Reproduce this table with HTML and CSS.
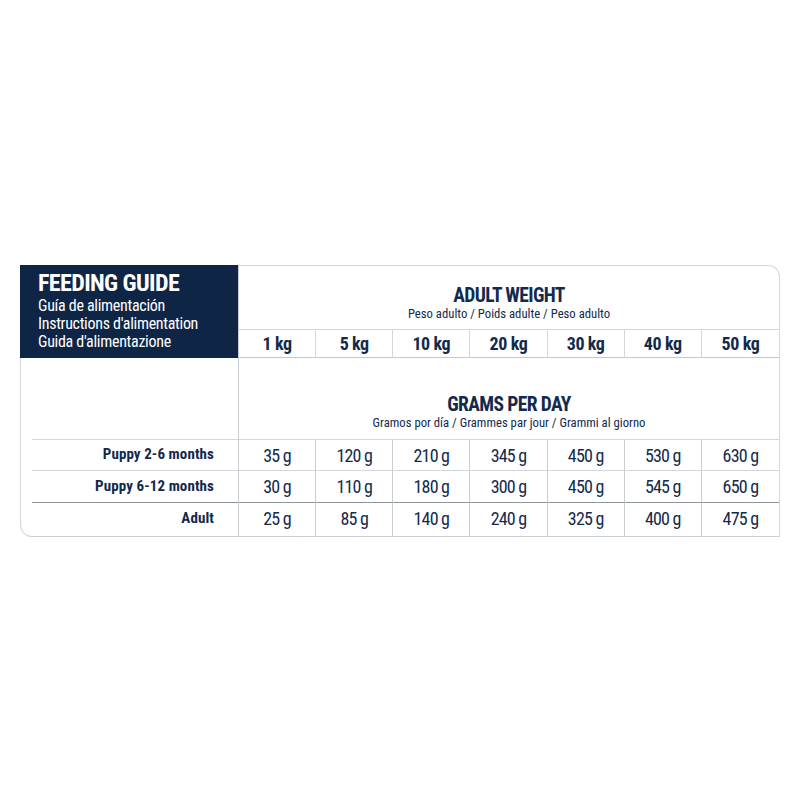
FILE: index.html
```html
<!DOCTYPE html>
<html lang="en">
<head>
<meta charset="utf-8">
<title>Feeding Guide</title>
<link rel="stylesheet" href="styles.css">
</head>
<body>
<div class="guide">
  <div class="brand">
    <div class="brand-title">FEEDING GUIDE</div>
    <div class="brand-sub">Guía de alimentación</div>
    <div class="brand-sub">Instructions d'alimentation</div>
    <div class="brand-sub">Guida d'alimentazione</div>
  </div>
  <div class="head head-weight">
    <div class="head-title">ADULT WEIGHT</div>
    <div class="head-sub">Peso adulto / Poids adulte / Peso adulto</div>
  </div>
  <div class="kg">1 kg</div>
  <div class="kg">5 kg</div>
  <div class="kg">10 kg</div>
  <div class="kg">20 kg</div>
  <div class="kg">30 kg</div>
  <div class="kg">40 kg</div>
  <div class="kg last">50 kg</div>

  <div class="spacer"></div>
  <div class="head head-grams">
    <div class="head-title">GRAMS PER DAY</div>
    <div class="head-sub">Gramos por día / Grammes par jour / Grammi al giorno</div>
  </div>

  <div class="label">Puppy 2-6 months</div>
  <div class="val">35 g</div><div class="val">120 g</div><div class="val">210 g</div><div class="val">345 g</div><div class="val">450 g</div><div class="val">530 g</div><div class="val last">630 g</div>

  <div class="label sep">Puppy 6-12 months</div>
  <div class="val sep">30 g</div><div class="val sep">110 g</div><div class="val sep">180 g</div><div class="val sep">300 g</div><div class="val sep">450 g</div><div class="val sep">545 g</div><div class="val sep last">650 g</div>

  <div class="label end">Adult</div>
  <div class="val end">25 g</div><div class="val end">85 g</div><div class="val end">140 g</div><div class="val end">240 g</div><div class="val end">325 g</div><div class="val end">400 g</div><div class="val end last">475 g</div>
</div>
</body>
</html>
```

FILE: styles.css
```css
html, body {
  margin: 0;
  padding: 0;
  background: #ffffff;
}

body {
  font-family: "Roboto Condensed", "Open Sans", "DejaVu Sans", sans-serif;
  font-stretch: 75%;
  color: #132a4c;
}

.guide {
  margin: 265px 0 0 20px;
  width: 760px;
  box-sizing: border-box;
  display: grid;
  grid-template-columns: 219px repeat(7, 1fr);
  grid-template-rows: 64px 28px 82px 31px 32px 33px;
  border: 1px solid #d3d6db;
  border-bottom-color: #c9cdd3;
  border-left: none;
  border-radius: 0 12px 0 12px;
}

.brand {
  grid-column: 1;
  grid-row: 1 / span 2;
  background: #0f2546;
  color: #ffffff;
  padding: 5px 0 0 18px;
  margin-top: -1px;
  border-right: 1px solid #c9cdd3;
  white-space: nowrap;
  overflow: hidden;
}

.brand-title {
  font-weight: bold;
  font-size: 24px;
  line-height: 27px;
  letter-spacing: -0.6px;
}

.brand-sub {
  font-size: 16px;
  line-height: 18px;
  letter-spacing: -0.3px;
}

.head {
  grid-column: 2 / span 7;
  display: flex;
  flex-direction: column;
  align-items: center;
  justify-content: flex-end;
  white-space: nowrap;
  border-bottom: 1px solid #d3d6db;
}

.head-weight {
  padding-bottom: 7px;
}

.head-grams {
  padding-bottom: 8px;
}

.head-title {
  font-weight: bold;
  font-size: 19.5px;
  line-height: 20px;
  letter-spacing: -0.6px;
}

.head-sub {
  font-size: 12.7px;
  line-height: 16px;
}

.kg {
  display: flex;
  align-items: center;
  justify-content: center;
  font-weight: bold;
  font-size: 18px;
  letter-spacing: -0.4px;
  padding-bottom: 1px;
  border-right: 1px solid #d3d6db;
  border-bottom: 1px solid #c3c7cd;
}

.kg.last,
.val.last {
  border-right: none;
}

.spacer,
.label {
  grid-column: 1;
  border-right: 1px solid #c9cdd3;
  border-left: 1px solid #d3d6db;
  background: linear-gradient(#d3d6db, #d3d6db) no-repeat 11px 100% / calc(100% - 11px) 1px;
}

.label {
  display: flex;
  align-items: center;
  justify-content: flex-end;
  padding: 0 24px 3px 0;
  font-weight: bold;
  font-size: 15px;
  letter-spacing: 0.1px;
}

.label.sep {
  background-image: linear-gradient(#8f959d, #8f959d);
}

.label.end {
  background: none;
  border-bottom-left-radius: 12px;
}

.val {
  display: flex;
  align-items: center;
  justify-content: center;
  font-size: 18px;
  letter-spacing: -0.8px;
  border-right: 1px solid #c9cdd3;
  border-bottom: 1px solid #d3d6db;
}

.val.sep {
  border-bottom-color: #8f959d;
}

.val.end {
  border-bottom: none;
  padding-bottom: 2px;
}
```
